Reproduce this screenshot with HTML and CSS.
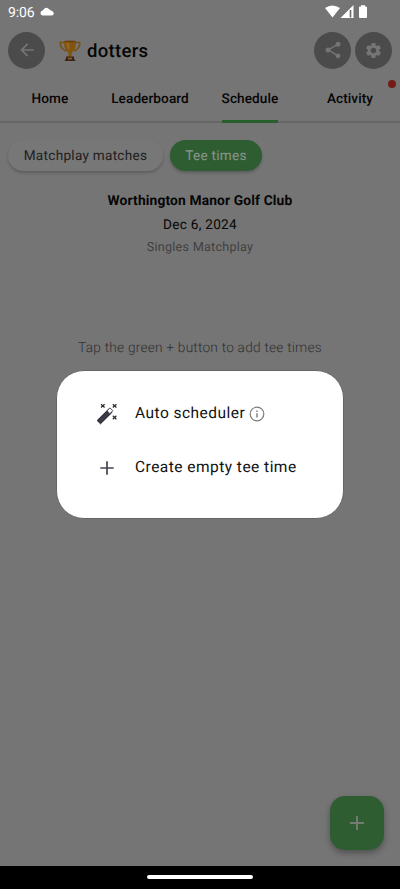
FILE: index.html
```html
<!DOCTYPE html>
<html lang="en">
<head>
<meta charset="utf-8">
<title>dotters</title>
<link rel="stylesheet" href="styles.css">
</head>
<body>
<div class="phone">
  <div class="status">
    <span class="clock">9:06</span>
    <svg class="cloud" width="14" height="9" viewBox="0 0 14 9"><path d="M3 8.500A2.400 2.400 0 0 1 2.200 3.800Q3.200 2.800 3.800 2.200Q6.500-.8 9.500 2.500Q10 3.200 11 3.500Q13.600 4 13.800 6.200Q13.900 8.500 11.500 8.500Z" fill="#fff"/></svg>
    <svg class="signals" width="44" height="14" viewBox="0 0 44 14" fill="#fff"><path d="M0 3Q7-2 15 3L7.500 12.500Z"/><path d="M15.500 13 28.500 0V13Z"/><path d="M24.700 5V12.500H26.300V5Z" fill="#666"/><path d="M36 1.500V.2H40V1.500H41Q42 1.500 42 2.500V12Q42 13 41 13H35Q34 13 34 12V2.500Q34 1.500 35 1.500Z"/></svg>
  </div>
  <header class="header">
    <span class="round"><svg width="20" height="20" viewBox="0 0 24 24"><path d="M20 11H7.830l5.590-5.590L12 4l-8 8 8 8 1.410-1.410L7.830 13H20z"/></svg></span>
    <svg class="trophy" width="22" height="22" viewBox="0 0 22 22">
      <path d="M5.500 2.500H1.200Q1 8.500 7 11M16.500 2.500H20.800Q21 8.500 15 11" fill="none" stroke="#785012" stroke-width="1.500"/>
      <path d="M5 1H17Q17.300 9.500 12.700 12.500L12.400 17H9.600L9.300 12.500Q4.700 9.500 5 1Z" fill="#80530e"/>
      <path d="M7 2.500H10.500V11Q7 8 7 2.500Z" fill="#96651a"/>
      <ellipse cx="11" cy="1.500" rx="6" ry="1" fill="#6b430b"/>
      <path d="M7 16.500H15V18.500L16.500 21H5.500L7 18.500Z" fill="#3c241b"/><path d="M9 17.700H13V19.300H9Z" fill="#87672b"/>
    </svg>
    <h1 class="title">dotters</h1>
    <span class="round"><svg width="20" height="20" viewBox="0 0 24 24"><path d="M18 16.080c-.76 0-1.440.3-1.960.77L8.910 12.700c.05-.23.09-.46.09-.7s-.04-.47-.09-.7l7.050-4.110c.54.5 1.250.81 2.040.81 1.660 0 3-1.340 3-3s-1.340-3-3-3-3 1.340-3 3c0 .24.04.47.09.7L8.040 9.810C7.500 9.310 6.790 9 6 9c-1.660 0-3 1.340-3 3s1.340 3 3 3c.79 0 1.500-.31 2.040-.81l7.120 4.160c-.05.21-.08.43-.08.65 0 1.610 1.310 2.920 2.920 2.920s2.920-1.310 2.920-2.920-1.310-2.920-2.920-2.920z"/></svg></span>
    <span class="round settings"><svg width="19" height="19" viewBox="0 0 24 24"><path d="M19.140 12.940c.04-.3.060-.61.060-.94s-.02-.64-.07-.94l2.030-1.580c.18-.14.23-.41.12-.61l-1.920-3.320c-.12-.22-.37-.29-.59-.22l-2.390.96c-.5-.38-1.030-.7-1.620-.94l-.36-2.540c-.04-.24-.24-.41-.48-.41h-3.840c-.24 0-.43.17-.47.410l-.36 2.540c-.59.24-1.130.57-1.620.94l-2.390-.96c-.22-.08-.47 0-.59.220L2.740 8.870c-.12.210-.08.470.12.610l2.030 1.580c-.05.3-.09.63-.09.940s.02.640.07.940l-2.030 1.580c-.18.14-.23.41-.12.610l1.920 3.320c.12.220.37.290.59.220l2.390-.96c.5.38 1.030.7 1.620.940l.36 2.540c.05.240.24.410.48.410h3.840c.24 0 .44-.17.470-.41l.36-2.540c.59-.24 1.130-.56 1.620-.94l2.390.960c.22.080.47 0 .59-.22l1.920-3.320c.12-.22.07-.47-.12-.61l-2.010-1.580zM12 15.600c-1.980 0-3.600-1.620-3.600-3.600s1.620-3.600 3.600-3.600 3.600 1.620 3.600 3.600-1.620 3.600-3.600 3.600z"/></svg></span>
  </header>
  <nav class="tabs">
    <span class="tab"><span class="tab-label">Home</span></span>
    <span class="tab"><span class="tab-label">Leaderboard</span></span>
    <span class="tab"><span class="tab-label active">Schedule</span></span>
    <span class="tab"><span class="tab-label">Activity</span><i class="dot"></i></span>
  </nav>
  <main class="content">
    <div class="chips"><span class="chip">Matchplay matches</span><span class="chip chip-on">Tee times</span></div>
    <h2 class="club">Worthington Manor Golf Club</h2>
    <p class="date">Dec 6, 2024</p>
    <p class="format">Singles Matchplay</p>
    <p class="hint">Tap the green + button to add tee times</p>
    <button class="fab"><svg width="24" height="24" viewBox="0 0 24 24"><path d="M5 12H19M12 5V19" stroke="#747b75" stroke-width="1.900"/></svg></button>
  </main>
  <footer class="navbar"><i class="pill"></i></footer>
  <section class="dialog">
    <div class="option">
      <svg width="22" height="22" viewBox="0 0 22 22"><path d="M1.200 17.500 12.600 6.200 15.900 9.500 4.500 20.800Z" fill="#3d3a48" stroke="#171520" stroke-width="1"/><path d="M11 7.800 14 4.900 16.800 7.700 13.900 10.700Z" fill="#fff" stroke="#383540" stroke-width=".9"/><path d="M5 1.200 8.600 4.500M8.600 1.200 5 4.500M16.800 1.200 20.400 4.500M20.400 1.200 16.800 4.500M16.800 12.800 20.400 16.200M20.400 12.800 16.800 16.200" stroke="#292732" stroke-width="1.200"/></svg>
      <span class="option-text">Auto scheduler</span>
      <svg class="info" width="16" height="16" viewBox="0 0 16 16"><circle cx="8" cy="8" r="6.800" fill="none" stroke="#7c7c7c" stroke-width="1.200"/><path d="M7.300 4.600H8.700V6H7.300ZM7.300 7.200H8.700V11.500H7.300Z" fill="#7c7c7c"/></svg>
    </div>
    <div class="option">
      <svg width="22" height="22" viewBox="0 0 22 22"><path d="M4.300 11H17.700M11 4.300V17.700" stroke="#45434f" stroke-width="1.700"/></svg>
      <span class="option-text">Create empty tee time</span>
    </div>
  </section>
</div>
</body>
</html>
```

FILE: styles.css
```css
* { box-sizing: border-box; }
body { margin: 0; background: #757575; font-family: Roboto, sans-serif; color: #060606; text-rendering: geometricPrecision; }
h1, h2, p { margin: 0; }
.phone { position: relative; width: 400px; height: 889px; display: flex; flex-direction: column; overflow: hidden; }
.status { height: 25px; display: flex; align-items: center; padding: 0 31px 0 8px; color: #fff; }
.clock { font-size: 14px; letter-spacing: -.15px; line-height: 16px; }
.cloud { margin-left: 6px; margin-top: -2px; }
.signals { margin-left: auto; margin-top: -1px; }
.header { height: 50px; display: flex; align-items: center; padding: 0 8px; }
.round { width: 37px; height: 37px; border-radius: 50%; background: #4b4b4b; display: flex; align-items: center; justify-content: center; }
.round svg { fill: #757575; }
.settings { margin-left: 4px; }
.trophy { margin-left: 14px; margin-top: 2px; }
.title { flex: 1; margin-left: 6px; font-size: 18.500px; font-weight: 500; line-height: 24px; letter-spacing: .3px; padding-top: 2px; }
.tabs { height: 48px; display: grid; grid-template-columns: repeat(4, 1fr); border-bottom: 2px solid #676767; }
.tab { position: relative; display: flex; justify-content: center; font-size: 13.600px; font-weight: 500; letter-spacing: .08px; }
.tab-label { line-height: 48px; height: 48px; }
.active { border-bottom: 3px solid #295f2c; border-radius: 2px 2px 0 0; }
.dot { position: absolute; right: 4px; top: 5px; width: 8px; height: 8px; border-radius: 50%; background: #731b15; }
.content { position: relative; height: 743px; display: flex; flex-direction: column; text-align: center; }
.chips { display: flex; gap: 7px; padding: 17px 8px 0; }
.chip { height: 31px; width: 155px; border-radius: 16px; background: #777; color: #202020; font-size: 13.600px; line-height: 33px; letter-spacing: .27px; box-shadow: 0 2px 3px rgba(0,0,0,.2); }
.chip-on { width: 92px; background: #2f5d32; color: #8b958b; }
.club { margin-top: 20px; font-size: 13.800px; line-height: 20px; font-weight: 700; letter-spacing: .14px; }
.date { margin-top: 4px; font-size: 13.600px; line-height: 20px; letter-spacing: .28px; }
.format { margin-top: 3px; font-size: 12.600px; line-height: 20px; letter-spacing: .26px; color: #414141; }
.hint { margin-top: 80px; font-size: 13.700px; line-height: 20px; font-weight: 300; letter-spacing: .22px; color: #303030; }
.fab { position: absolute; right: 16px; bottom: 16px; width: 54px; height: 54px; border: 0; border-radius: 15px; padding: 0; background: #2f5d32; display: flex; align-items: center; justify-content: center; box-shadow: 0 3px 6px rgba(0,0,0,.32); }
.navbar { height: 23px; background: #000; display: flex; justify-content: center; padding-top: 9px; }
.pill { width: 106px; height: 4px; border-radius: 2px; background: #fff; }
.dialog { position: absolute; left: 56px; top: 370px; width: 288px; height: 149px; padding: 16px 39px; border: 1px solid #656565; border-radius: 28px; background: #fff; }
.option { height: 54px; display: flex; align-items: center; }
.option-text { margin-left: 17px; font-size: 15.500px; line-height: 20px; letter-spacing: .47px; color: #111; white-space: nowrap; margin-top: -2px; }
.info { margin-left: 4px; margin-top: -1px; }
```
